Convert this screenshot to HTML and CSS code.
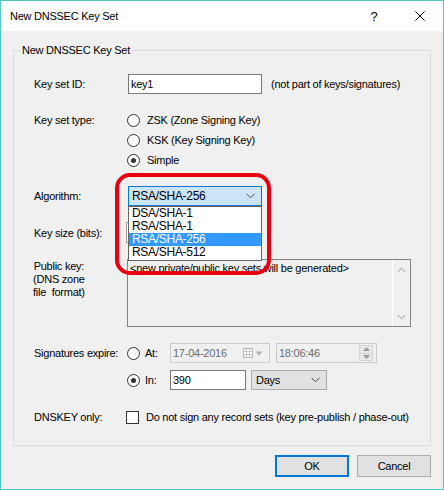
FILE: index.html
```html
<!DOCTYPE html>
<html>
<head>
<meta charset="utf-8">
<title>New DNSSEC Key Set</title>
<link rel="stylesheet" href="styles.css">
</head>
<body>
<div class="window">
  <div class="titlebar">
    <span class="title">New DNSSEC Key Set</span>
    <span class="capbtn help">?</span>
    <span class="capbtn close"><svg width="10" height="10" viewBox="0 0 10 10"><path d="M0.5 0.5 L9.5 9.5 M9.5 0.5 L0.5 9.5" stroke="#000" stroke-width="1" fill="none"/></svg></span>
  </div>
  <div class="client">
    <fieldset class="group">
      <legend>New DNSSEC Key Set</legend>
      <div class="inner">
        <div class="row">
          <span class="lbl">Key set ID:</span>
          <div class="tb id">key1</div>
          <span class="hint">(not part of keys/signatures)</span>
        </div>
        <div class="row type">
          <span class="lbl">Key set type:</span>
          <div class="radios">
            <div class="opt"><span class="radio"></span>ZSK (Zone Signing Key)</div>
            <div class="opt"><span class="radio"></span>KSK (Key Signing Key)</div>
            <div class="opt"><span class="radio on"></span>Simple</div>
          </div>
        </div>
        <div class="row g16">
          <span class="lbl">Algorithm:</span>
          <div class="combo-wrap">
            <div class="combo active"><span>RSA/SHA-256</span><svg width="9" height="6" viewBox="0 0 9 6"><path d="M0.5 0.8 L4.5 4.8 L8.5 0.8" stroke="#505050" stroke-width="1" fill="none"/></svg></div>
            <ul class="droplist">
              <li>DSA/SHA-1</li>
              <li>RSA/SHA-1</li>
              <li class="sel">RSA/SHA-256</li>
              <li>RSA/SHA-512</li>
            </ul>
          </div>
        </div>
        <div class="row g16 h21">
          <span class="lbl">Key size (bits):</span>
          <div class="tb size"></div>
        </div>
        <div class="row pk g16">
          <span class="lbl multi"><span class="ml">Public key:<br>(DNS zone<br>file&nbsp; format)</span></span>
          <div class="memo">
            <div class="memo-text">&lt;new private/public key sets will be generated&gt;</div>
            <div class="vscroll">
              <svg width="9" height="6" viewBox="0 0 9 6"><path d="M0.8 5 L4.5 1.3 L8.2 5" stroke="#c2c2c2" stroke-width="1.6" fill="none"/></svg>
              <svg width="9" height="6" viewBox="0 0 9 6"><path d="M0.8 1 L4.5 4.7 L8.2 1" stroke="#c2c2c2" stroke-width="1.6" fill="none"/></svg>
            </div>
          </div>
        </div>
        <div class="row g16">
          <span class="lbl">Signatures expire:</span>
          <div class="ropt"><span class="radio"></span>At:</div>
          <div class="picker date">
            <span class="ptext">17-04-2016</span>
            <svg class="cal" width="10" height="10" viewBox="0 0 10 10"><rect x="0.5" y="0.5" width="9" height="9" fill="#fff" stroke="#b4b4b4"/><path d="M0.5 3.5 H9.5 M0.5 6.5 H9.5 M3.5 0.5 V9.5 M6.5 0.5 V9.5" stroke="#c8c8c8" stroke-width="1"/></svg>
            <svg class="tri" width="8" height="5" viewBox="0 0 8 5"><path d="M0.5 0.5 H7.5 L4 4.5 Z" fill="#b0b0b0"/></svg>
          </div>
          <div class="picker time">
            <span class="ptext">18:06:46</span>
            <div class="spin">
              <div class="sp"><svg width="7" height="4" viewBox="0 0 7 4"><path d="M0 4 L3.5 0 L7 4 Z" fill="#9a9a9a"/></svg></div>
              <div class="sp"><svg width="7" height="4" viewBox="0 0 7 4"><path d="M0 0 L3.5 4 L7 0 Z" fill="#9a9a9a"/></svg></div>
            </div>
          </div>
        </div>
        <div class="row g7">
          <span class="lbl"></span>
          <div class="ropt"><span class="radio on"></span>In:</div>
          <div class="tb in">390</div>
          <div class="combo days"><span>Days</span><svg width="9" height="6" viewBox="0 0 9 6"><path d="M0.5 0.8 L4.5 4.8 L8.5 0.8" stroke="#404040" stroke-width="1" fill="none"/></svg></div>
        </div>
        <div class="row g17">
          <span class="lbl">DNSKEY only:</span>
          <span class="check"></span>
          <span>Do not sign any record sets (key pre-publish / phase-out)</span>
        </div>
      </div>
    </fieldset>
    <div class="buttons">
      <button class="btn default">OK</button>
      <button class="btn">Cancel</button>
    </div>
  </div>
  <div class="callout"></div>
</div>
</body>
</html>
```
FILE: styles.css
```css
html, body {
  margin: 0;
  padding: 0;
  background: #f0f0f0;
}
body {
  font-family: "Liberation Sans", Arial, sans-serif;
  font-size: 11px;
  letter-spacing: -0.25px;
  color: #000;
}
.window {
  position: relative;
  width: 444px;
  height: 490px;
  box-sizing: border-box;
  border: 1px solid #52c4c8;
  background: #f0f0f0;
  display: flex;
  flex-direction: column;
}
.titlebar {
  flex: none;
  height: 30px;
  background: #fff;
  display: flex;
  align-items: center;
  padding-left: 9px;
}
.title {
  flex: 1;
  font-size: 11px;
}
.capbtn {
  width: 46px;
  height: 30px;
  display: flex;
  align-items: center;
  justify-content: center;
}
.help {
  font-size: 13px;
  padding-top: 1px;
  box-sizing: border-box;
}
.client {
  flex: 1;
  padding: 0 12px;
}
.group {
  margin: 12px 0 0;
  padding: 0;
  border: 1px solid #dcdcdc;
  min-width: 0;
}
.group legend {
  margin-left: 6px;
  padding: 0 2px;
  line-height: 14px;
}
.inner {
  padding: 17px 0 18px 20px;
}
.row {
  display: flex;
  align-items: center;
  height: 20px;
}
.row.g16 { margin-top: 16px; }
.row.g7 { margin-top: 7px; }
.row.g17 { margin-top: 17px; }
.row.h21 { height: 21px; }
.lbl {
  flex: none;
  width: 93px;
}
.tb {
  box-sizing: border-box;
  height: 20px;
  border: 1px solid #7a7a7a;
  background: #fff;
  padding: 0 2px;
  display: flex;
  align-items: center;
}
.tb.id {
  width: 134px;
  margin-left: 1px;
}
.hint {
  margin-left: 9px;
}
.row.type {
  height: auto;
  align-items: flex-start;
  margin-top: 16px;
}
.row.type .lbl {
  line-height: 20px;
}
.opt {
  height: 20px;
  display: flex;
  align-items: center;
}
.radio {
  flex: none;
  position: relative;
  width: 13px;
  height: 13px;
  box-sizing: border-box;
  border: 1px solid #333;
  border-radius: 50%;
  background: #fff;
  margin-right: 7px;
}
.radio.on::after {
  content: "";
  position: absolute;
  left: 3px;
  top: 3px;
  width: 5px;
  height: 5px;
  border-radius: 50%;
  background: #333;
}
.combo-wrap {
  position: relative;
  width: 134px;
  height: 20px;
  margin-left: 1px;
}
.combo {
  box-sizing: border-box;
  height: 20px;
  display: flex;
  align-items: center;
  justify-content: space-between;
}
.combo.active {
  border: 1px solid #0078d7;
  background: #cce4f7;
  padding: 0 6px 0 3px;
  font-size: 12px;
  letter-spacing: -0.3px;
}
.droplist {
  position: absolute;
  left: 0;
  top: 20px;
  width: 134px;
  box-sizing: border-box;
  margin: 0;
  padding: 0 0 1px;
  list-style: none;
  border: 1px solid #646464;
  background: #fff;
  z-index: 2;
  font-size: 12px;
  letter-spacing: -0.3px;
}
.droplist li {
  height: 13px;
  line-height: 13px;
  padding-left: 3px;
}
.droplist li.sel {
  background: #3399ff;
  color: #fff;
}
.tb.size {
  width: 80px;
  height: 21px;
  margin-left: -1px;
  border-color: #a0a0a0;
}
.row.pk {
  height: auto;
  align-items: flex-start;
}
.lbl.multi {
  line-height: 13px;
  padding-top: 1px;
  box-sizing: border-box;
}
.ml {
  display: inline-block;
  text-align: center;
  margin-left: -1px;
}
.memo {
  box-sizing: border-box;
  width: 284px;
  height: 68px;
  border: 1px solid #828282;
  background: #f0f0f0;
  display: flex;
}
.memo-text {
  flex: 1;
  padding: 2px 2px 0;
  line-height: 13px;
}
.vscroll {
  flex: none;
  box-sizing: border-box;
  width: 18px;
  border-left: 1px solid #fff;
  display: flex;
  flex-direction: column;
  justify-content: space-between;
  align-items: center;
  padding: 7px 0 6px;
}
.ropt {
  flex: none;
  width: 43px;
  display: flex;
  align-items: center;
}
.ropt .radio {
  margin-right: 5px;
}
.picker {
  box-sizing: border-box;
  height: 20px;
  border: 1px solid #cccccc;
  background: #f0f0f0;
  color: #6d6d6d;
  display: flex;
  align-items: center;
  padding-left: 2px;
}
.picker.date {
  width: 100px;
}
.picker .ptext {
  flex: 1;
}
.cal {
  margin-right: 2px;
}
.tri {
  margin-right: 6px;
}
.picker.time {
  width: 101px;
  margin-left: 6px;
  padding-right: 3px;
}
.spin {
  width: 14px;
  height: 16px;
  display: flex;
  flex-direction: column;
  border: 1px solid #d4d4d4;
  box-sizing: border-box;
  background: #e8e8e8;
}
.sp {
  flex: 1;
  display: flex;
  align-items: center;
  justify-content: center;
}
.sp + .sp {
  border-top: 1px solid #d4d4d4;
}
.tb.in {
  width: 76px;
}
.combo.days {
  width: 76px;
  margin-left: 5px;
  border: 1px solid #adadad;
  background: #e1e1e1;
  padding: 0 6px 0 4px;
}
.check {
  flex: none;
  width: 13px;
  height: 13px;
  box-sizing: border-box;
  border: 1px solid #333;
  background: #fff;
  margin-left: -1px;
  margin-right: 7px;
}
.buttons {
  display: flex;
  justify-content: flex-end;
  gap: 8px;
  margin-top: 9px;
}
.btn {
  width: 74px;
  height: 22px;
  box-sizing: border-box;
  background: #e1e1e1;
  border: 1px solid #adadad;
  font: inherit;
  letter-spacing: inherit;
  color: #000;
  padding: 0;
}
.btn.default {
  border: 2px solid #0078d7;
}
.callout {
  position: absolute;
  left: 114px;
  top: 172px;
  width: 156px;
  height: 102px;
  box-sizing: border-box;
  border: 4px solid #e8000e;
  border-radius: 15px;
  z-index: 3;
  pointer-events: none;
}
```
